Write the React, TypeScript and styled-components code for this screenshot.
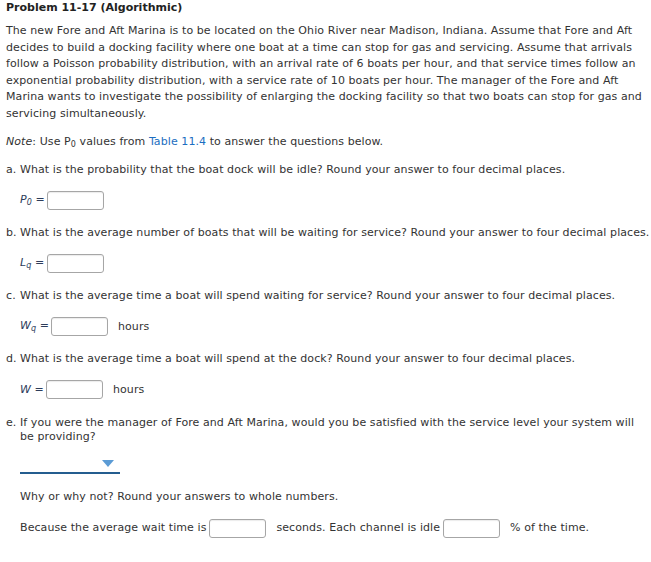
import React from "react";
import styled, { createGlobalStyle } from "styled-components";

const GlobalStyle = createGlobalStyle`
  body {
    margin: 0;
    background: #fff;
    color: #333;
    font-family: "DejaVu Sans", Verdana, sans-serif;
    font-size: 11px;
    letter-spacing: 0.08px;
  }
`;

const Page = styled.div`
  padding-left: 6px;
  box-sizing: border-box;
  width: 651px;
`;

const Title = styled.div`
  font-weight: bold;
  color: #222;
  line-height: 16px;
  letter-spacing: 0;
`;

const Intro = styled.p`
  margin: 7px 0 0;
  line-height: 16.6px;
`;

const Note = styled.p`
  margin: 11px 0 0;
  line-height: 16px;
`;

const Link = styled.span`
  color: #1c6ec1;
`;

const Question = styled.div<{ $gap: number }>`
  display: flex;
  margin-top: ${({ $gap }) => $gap}px;
  line-height: 14px;
`;

const Marker = styled.span`
  width: 14px;
  flex: none;
`;

const AnswerRow = styled.div`
  display: flex;
  align-items: center;
  gap: 4px;
  margin-top: 14px;
  padding-left: 14px;
  height: 19px;
`;

const Var = styled.span<{ $w: number }>`
  font-style: italic;
  color: #2d3c5a;
  width: ${({ $w }) => $w}px;
  white-space: nowrap;
`;

const Box = styled.input`
  width: 57px;
  height: 19px;
  box-sizing: border-box;
  border: 1px solid #a6a6a6;
  border-radius: 3px;
  box-shadow: inset 0 1px 1px rgba(0, 0, 0, 0.08);
  padding: 0;
  margin: 0;
`;

const Unit = styled.span`
  margin-left: 6px;
`;

const Sub = styled.span`
  font-size: 8px;
  vertical-align: -2px;
`;

const Block = styled.div`
  padding-left: 14px;
`;

const Select = styled.div`
  position: relative;
  width: 100px;
  height: 20px;
  margin-top: 8px;
  border-bottom: 2px solid #245d8f;
`;

const Caret = styled.svg`
  position: absolute;
  right: 6px;
  top: 8px;
`;

const Line = styled.div<{ $gap: number }>`
  line-height: 14px;
  margin-top: ${({ $gap }) => $gap}px;
  display: flex;
  align-items: center;
`;

const InlineBox = styled(Box)`
  margin: 0 10px 0 3px;
`;

export default function App() {
  return (
    <Page>
      <GlobalStyle />
      <Title>Problem 11-17 (Algorithmic)</Title>
      <Intro>
        The new Fore and Aft Marina is to be located on the Ohio River near Madison, Indiana. Assume that Fore and Aft
        decides to build a docking facility where one boat at a time can stop for gas and servicing. Assume that arrivals
        follow a Poisson probability distribution, with an arrival rate of 6 boats per hour, and that service times follow an
        exponential probability distribution, with a service rate of 10 boats per hour. The manager of the Fore and Aft
        Marina wants to investigate the possibility of enlarging the docking facility so that two boats can stop for gas and
        servicing simultaneously.
      </Intro>
      <Note>
        <i>Note</i>: Use P<Sub>0</Sub> values from <Link>Table 11.4</Link> to answer the questions below.
      </Note>

      <Question $gap={10}>
        <Marker>a.</Marker>
        <span>What is the probability that the boat dock will be idle? Round your answer to four decimal places.</span>
      </Question>
      <AnswerRow>
        <Var $w={23}>P<Sub>0</Sub> =</Var>
        <Box />
      </AnswerRow>

      <Question $gap={16}>
        <Marker>b.</Marker>
        <span>What is the average number of boats that will be waiting for service? Round your answer to four decimal places.</span>
      </Question>
      <AnswerRow>
        <Var $w={23}>L<Sub>q</Sub> =</Var>
        <Box />
      </AnswerRow>

      <Question $gap={16}>
        <Marker>c.</Marker>
        <span>What is the average time a boat will spend waiting for service? Round your answer to four decimal places.</span>
      </Question>
      <AnswerRow>
        <Var $w={27}>W<Sub>q</Sub> =</Var>
        <Box />
        <Unit>hours</Unit>
      </AnswerRow>

      <Question $gap={16}>
        <Marker>d.</Marker>
        <span>What is the average time a boat will spend at the dock? Round your answer to four decimal places.</span>
      </Question>
      <AnswerRow>
        <Var $w={22}>W =</Var>
        <Box />
        <Unit>hours</Unit>
      </AnswerRow>

      <Question $gap={17}>
        <Marker>e.</Marker>
        <span>
          If you were the manager of Fore and Aft Marina, would you be satisfied with the service level your system will
          be providing?
        </span>
      </Question>
      <Block>
        <Select>
          <Caret width="12" height="7" viewBox="0 0 12 7">
            <path d="M0 0 H12 L6 7 Z" fill="#5b9bd5" />
          </Caret>
        </Select>
        <Line $gap={16}>Why or why not? Round your answers to whole numbers.</Line>
        <Line $gap={15}>
          Because the average wait time is
          <InlineBox />
          seconds. Each channel is idle
          <InlineBox />
          % of the time.
        </Line>
      </Block>
    </Page>
  );
}
